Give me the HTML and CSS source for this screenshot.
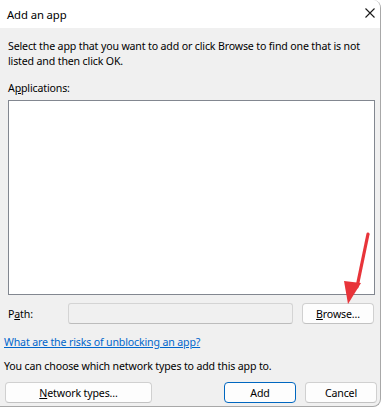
FILE: index.html
```html
<!DOCTYPE html>
<html>
<head>
<meta charset="utf-8">
<link rel="stylesheet" href="styles.css">
</head>
<body>
<div class="window">
  <div class="titlebar">
    <span class="title">Add an app</span>
    <svg class="close" width="10" height="10" viewBox="0 0 10 10"><path d="M0.5 0.5 L9.5 9.5 M9.5 0.5 L0.5 9.5" stroke="#1a1a1a" stroke-width="1.1" fill="none"/></svg>
  </div>
  <div class="content">
    <p class="desc">Select the app that you want to add or click Browse to find one that is not listed and then click OK.</p>
    <div class="label">A<u>p</u>plications:</div>
    <div class="listbox"></div>
    <div class="pathrow">
      <span class="pathlabel">P<u>a</u>th:</span>
      <div class="pathbox"></div>
      <button class="btn browse"><u>B</u>rowse...</button>
    </div>
    <a class="link" href="#">What are the risks of unblocking an app?</a>
    <div class="note">You can choose which network types to add this app to.</div>
    <div class="btnrow">
      <button class="btn network"><u>N</u>etwork types...</button>
      <div class="spacer"></div>
      <button class="btn add">Add</button>
      <button class="btn cancel">Cancel</button>
    </div>
  </div>
  <svg class="arrow" width="40" height="90" viewBox="0 0 40 90">
    <path d="M35 5 L24 58" stroke="#e8343a" stroke-width="3.2" stroke-linecap="round" fill="none"/>
    <path d="M11 52 L28 54 L15 75 Z" fill="#e8343a"/>
  </svg>
</div>
</body>
</html>
```
FILE: styles.css
```css
html, body {
  margin: 0;
  padding: 0;
  background: #ffffff;
}
body {
  font-family: "Noto Sans", "Open Sans", sans-serif;
  font-size: 10.6px;
  letter-spacing: -0.15px;
  color: #000;
}
.window {
  position: relative;
  width: 380px;
  height: 406px;
  background: #f0f0f0;
  border-right: 1px solid #a8a8a8;
  border-bottom: 1px solid #a8a8a8;
  border-radius: 0 8px 8px 0;
  overflow: hidden;
}
.titlebar {
  height: 28px;
  background: #ffffff;
  display: flex;
  align-items: center;
  justify-content: space-between;
  padding: 0 5px 0 7px;
}
.title {
  font-size: 11.3px;
  letter-spacing: -0.1px;
  color: #000;
}
.close {
  display: block;
  margin-top: -2px;
}
.content {
  padding: 11px 0 0 0;
}
.desc {
  margin: 0 0 0 8px;
  line-height: 15px;
  width: 370px;
}
.label {
  margin: 12px 0 0 8px;
  line-height: 15px;
}
.listbox {
  margin: 4px 0 0 8px;
  width: 365px;
  height: 193px;
  background: #fff;
  border: 1px solid #828790;
}
.pathrow {
  display: flex;
  align-items: center;
  margin-top: 8px;
  height: 21px;
}
.pathlabel {
  width: 60px;
  padding-left: 8px;
}
.pathbox {
  width: 223px;
  height: 19px;
  background: #f0f0f0;
  border: 1px solid #d4d4d4;
  border-bottom-color: #bcbcbc;
  border-radius: 3px;
}
.btn {
  font-family: inherit;
  font-size: 10.6px;
  letter-spacing: -0.15px;
  color: #000;
  background: #fdfdfd;
  border: 1px solid #d0d0d0;
  border-bottom-color: #c2c2c2;
  border-radius: 4px;
  height: 21px;
  padding: 0;
  margin: 0;
}
.browse {
  width: 72px;
  margin-left: 9px;
}
.link {
  display: block;
  margin: 11px 0 0 4px;
  line-height: 15px;
  color: #0066cc;
  text-decoration: underline;
}
.note {
  margin: 9px 0 0 4px;
  line-height: 15px;
}
.btnrow {
  display: flex;
  margin: 8px 0 0 5px;
}
.network {
  width: 147px;
}
.spacer {
  width: 72px;
}
.add {
  width: 72px;
  border: 1px solid #0067c0;
}
.cancel {
  width: 72px;
  margin-left: 9px;
}
.arrow {
  position: absolute;
  left: 333px;
  top: 229px;
}
```
